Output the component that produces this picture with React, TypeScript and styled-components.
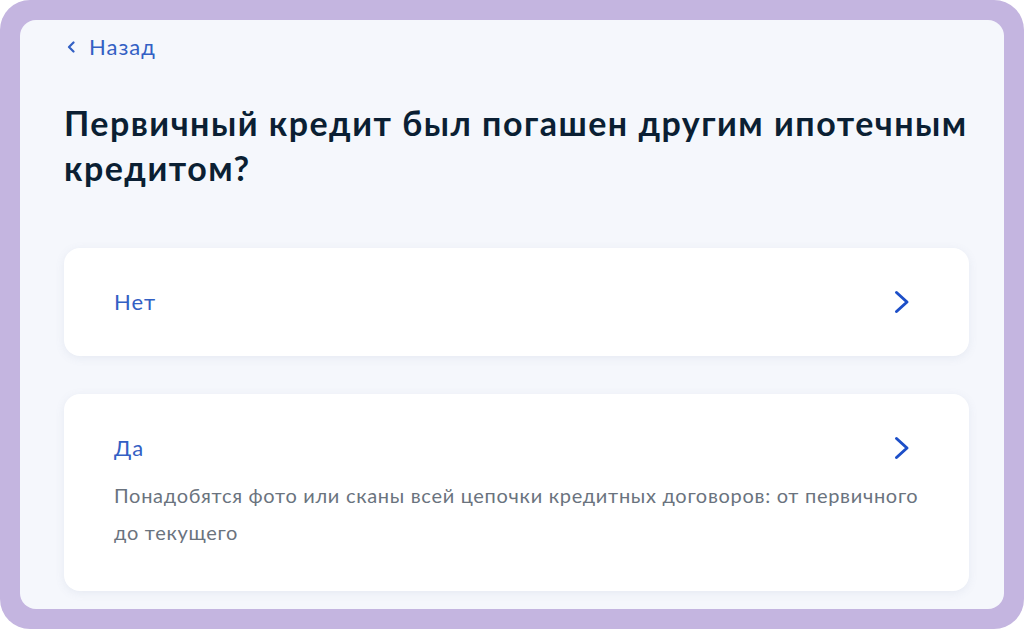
import React from 'react'
import styled, { createGlobalStyle } from 'styled-components'

const GlobalStyle = createGlobalStyle`
  *,
  *:before,
  *:after {
    box-sizing: border-box;
  }

  html,
  body {
    margin: 0;
    padding: 0;
    background: #fff;
    font-family: Lato, 'Noto Sans', sans-serif;
  }
`

const Frame = styled.div`
  width: 1024px;
  height: 629px;
  padding: 20px;
  background: #c4b5e0;
  border-radius: 30px;
`

const Panel = styled.main`
  height: 100%;
  padding: 14px 36px 0 44px;
  background: #f5f7fc;
  border-radius: 16px;
  overflow: hidden;
`

const BackLink = styled.a`
  display: inline-flex;
  align-items: center;
  gap: 14px;
  padding-left: 3px;
  color: #3360c4;
  font-size: 22px;
  line-height: 26px;
  letter-spacing: 1px;
  text-decoration: none;
`

const Title = styled.h1`
  margin: 40px 0 0;
  color: #0b1f33;
  font-size: 34px;
  font-weight: 700;
  line-height: 45px;
  letter-spacing: 1.5px;
`

const Options = styled.div`
  display: flex;
  flex-direction: column;
  gap: 38px;
  margin-top: 58px;
  width: 905px;
`

const Card = styled.button`
  display: flex;
  flex-direction: column;
  width: 100%;
  padding: 40px 40px 40px 50px;
  border: none;
  border-radius: 16px;
  background: #fff;
  box-shadow: 0 2px 10px rgba(102, 114, 160, 0.1);
  font-family: inherit;
  text-align: left;
  cursor: pointer;
`

const CardHead = styled.div`
  display: flex;
  align-items: center;
  justify-content: space-between;
  padding-right: 19px;
`

const Label = styled.span`
  color: #3360c4;
  font-size: 22px;
  line-height: 28px;
  letter-spacing: 1px;
`

const Hint = styled.p`
  margin: 15px 0 0;
  color: #6a737e;
  font-size: 20px;
  line-height: 37px;
  letter-spacing: 0.7px;
`

const ArrowBox = styled.span`
  display: flex;
  align-items: center;
  height: 28px;
  color: #1d4fc8;
`

function Chevron({ left }: { left?: boolean }) {
  return left ? (
    <svg width="8" height="12" viewBox="0 0 8 12" fill="none">
      <path d="M6.5 1.5L2 6l4.5 4.5" stroke="currentColor" strokeWidth="2.2" strokeLinecap="round" strokeLinejoin="round" />
    </svg>
  ) : (
    <svg width="16" height="24" viewBox="0 0 16 24" fill="none">
      <path d="M2.5 2.5L13 12 2.5 21.5" stroke="currentColor" strokeWidth="3" strokeLinecap="round" strokeLinejoin="round" />
    </svg>
  )
}

const options = [
  { label: 'Нет' },
  {
    label: 'Да',
    hint: 'Понадобятся фото или сканы всей цепочки кредитных договоров: от первичного до текущего',
  },
]

export default function App() {
  return (
    <>
      <GlobalStyle />
      <Frame>
        <Panel>
          <BackLink href="#">
            <Chevron left />
            Назад
          </BackLink>
          <Title>Первичный кредит был погашен другим ипотечным кредитом?</Title>
          <Options>
            {options.map((o) => (
              <Card key={o.label}>
                <CardHead>
                  <Label>{o.label}</Label>
                  <ArrowBox>
                    <Chevron />
                  </ArrowBox>
                </CardHead>
                {o.hint && <Hint>{o.hint}</Hint>}
              </Card>
            ))}
          </Options>
        </Panel>
      </Frame>
    </>
  )
}
